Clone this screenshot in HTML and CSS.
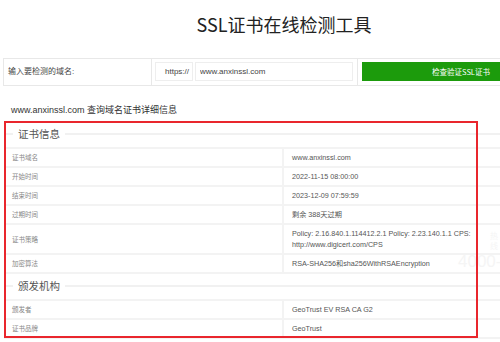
FILE: index.html
```
<!DOCTYPE html>
<html lang="zh-CN">

<head>
    <meta charset="UTF-8">
    <title>SSL证书在线检测工具</title>
    <link rel="stylesheet" href="styles.css">
</head>

<body>
    <div class="wrap">
        <h1 class="title">SSL证书在线检测工具</h1>
        <div class="search">
            <div class="search-label">输入要检测的域名:</div>
            <div class="search-input">
                <span class="proto">https://</span>
                <input class="domain" type="text" value="www.anxinssl.com">
            </div>
            <div class="search-btn"><button>检查验证SSL证书</button></div>
        </div>
        <p class="caption">www.anxinssl.com 查询域名证书详细信息</p>
        <div class="info">
            <div class="sec-head"><div class="legend">证书信息</div></div>
            <div class="row"><div class="key">证书域名</div><div class="val">www.anxinssl.com</div></div>
            <div class="row"><div class="key">开始时间</div><div class="val">2022-11-15 08:00:00</div></div>
            <div class="row"><div class="key">结束时间</div><div class="val">2023-12-09 07:59:59</div></div>
            <div class="row"><div class="key">过期时间</div><div class="val">剩余 388天过期</div></div>
            <div class="row"><div class="key">证书策略</div><div class="val">Policy: 2.16.840.1.114412.2.1 Policy: 2.23.140.1.1 CPS: http://www.digicert.com/CPS</div></div>
            <div class="row"><div class="key">加密算法</div><div class="val">RSA-SHA256和sha256WithRSAEncryption</div></div>
            <div class="sec-head"><div class="legend">颁发机构</div></div>
            <div class="row"><div class="key">颁发者</div><div class="val">GeoTrust EV RSA CA G2</div></div>
            <div class="row"><div class="key">证书品牌</div><div class="val">GeoTrust</div></div>
            <!-- 页面背后透出来的热线水印 -->
            <div class="hotline"><small>热线</small>4000-</div>
            <!-- 红色标注框 -->
            <div class="mark"></div>
        </div>
    </div>
</body>

</html>
```
FILE: styles.css
```
* {
    box-sizing: border-box;
}

html,
body {
    margin: 0;
    overflow: hidden;
    background: #fff;
}

body {
    font-family: "Liberation Sans", "Noto Sans CJK SC", sans-serif;
    color: #333;
}

.wrap {
    width: 568px;
}

.title {
    margin: 0;
    padding-top: 12px;
    height: 36px;
    text-align: center;
    font: normal 18px/24px "Noto Sans CJK SC", sans-serif;
    color: #222;
}

/* 输入框一行 */
.search {
    display: flex;
    margin: 22px 0 0 3px;
    height: 28px;
    border: 1px solid #e8e8e8;
}

.search-label {
    width: 148px;
    border-right: 1px solid #e8e8e8;
    padding-left: 4px;
    font-size: 8px;
    line-height: 26px;
    color: #444;
}

.search-input {
    display: flex;
    gap: 2px;
    width: 206px;
    padding: 3px;
    border-right: 1px solid #e8e8e8;
}

.proto {
    width: 38px;
    height: 19px;
    border: 1px solid #eee;
    padding-right: 3px;
    text-align: right;
    font-size: 8px;
    line-height: 17px;
    color: #444;
}

.domain {
    width: 158px;
    height: 19px;
    margin: 0;
    border: 1px solid #eee;
    padding: 0 4px;
    font: 8px "Liberation Sans", sans-serif;
    color: #444;
    outline: none;
}

.search-btn {
    padding: 3px 4px;
}

.search-btn button {
    display: block;
    width: 198px;
    height: 19px;
    border: 0;
    background: #1c9b0c;
    color: #fff;
    font: 7.5px "Noto Sans CJK SC", sans-serif;
}

.caption {
    margin: 17px 0 0 11px;
    font-size: 9px;
    line-height: 14px;
    color: #333;
}

/* 证书详情表 */
.info {
    position: relative;
    margin: 5px 0 0 4px;
    width: 496px;
}

.sec-head {
    height: 27px;
    padding-top: 5px;
    border-bottom: 2px solid #f3f3f3;
}

.legend {
    display: flex;
    align-items: center;
    gap: 5px;
    font-size: 10.5px;
    line-height: 14px;
    color: #555;
}

.legend::before,
.legend::after {
    content: "";
    height: 2px;
    background: #f1f1f1;
}

.legend::before {
    width: 9px;
}

.legend::after {
    flex: 1;
}

.row {
    display: flex;
    border-bottom: 2px solid #f3f3f3;
}

.key {
    display: flex;
    align-items: center;
    width: 280px;
    padding: 3px 8px;
    border-right: 2px solid #f3f3f3;
    font-size: 6.5px;
    line-height: 11px;
    color: #888;
}

.val {
    flex: 1;
    padding: 3px 12px 3px 8px;
    font-size: 7.2px;
    line-height: 11px;
    color: #555;
}

.hotline {
    position: absolute;
    left: 454px;
    top: 110px;
    font-size: 17px;
    line-height: 20px;
    color: #f5f5f5;
}

.hotline small {
    display: block;
    padding-left: 32px;
    font-size: 8px;
    line-height: 10px;
}

.mark {
    position: absolute;
    left: 0;
    top: -1px;
    width: 474px;
    height: 217px;
    border: 2px solid #e9262d;
}
```
